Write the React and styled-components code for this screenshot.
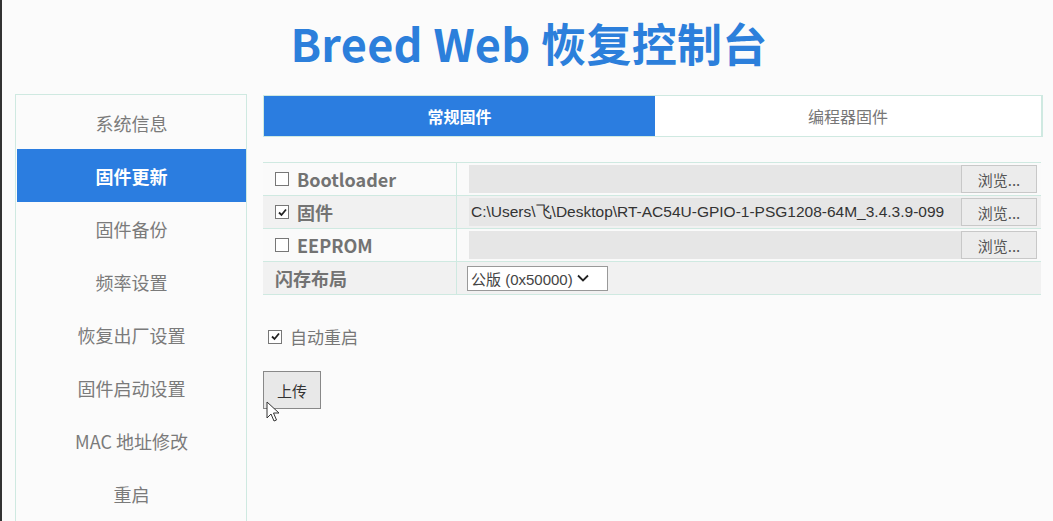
import styled, { createGlobalStyle } from 'styled-components';

const GlobalStyle = createGlobalStyle`
  html, body {
    margin: 0;
    padding: 0;
    background: #fbfbfb;
    font-family: "Noto Sans CJK SC", "Noto Sans", sans-serif;
    overflow: hidden;
  }
`;

const Page = styled.div`
  width: 1053px;
  height: 521px;
  box-sizing: border-box;
  border-left: 2px solid #333;
  padding: 0 10px 0 13px;
  overflow: hidden;
`;

const Title = styled.h1`
  margin: 0;
  height: 94px;
  display: flex;
  align-items: center;
  justify-content: center;
  padding-bottom: 9px;
  box-sizing: border-box;
  color: #2c7fdb;
  font-size: 45px;
  font-weight: 700;
  letter-spacing: 0.3px;
`;

const Body = styled.div`
  display: grid;
  grid-template-columns: 232px 1fr;
  gap: 16px;
`;

const Sidebar = styled.nav`
  border: 1px solid #cfe9e1;
  border-bottom: none;
  height: 440px;
  box-sizing: border-box;
  display: flex;
  flex-direction: column;
  padding: 1px 0 0;
`;

const NavItem = styled.div`
  height: 53px;
  display: flex;
  align-items: center;
  justify-content: center;
  font-size: 18px;
  color: ${(p) => (p.active ? '#fff' : '#7a7a7a')};
  background: ${(p) => (p.active ? '#2b7de0' : 'transparent')};
  font-weight: ${(p) => (p.active ? 700 : 400)};
  margin-left: 1px;
`;

const Main = styled.div`
  padding-top: 1px;
  width: 780px;
`;

const Tabs = styled.div`
  display: grid;
  grid-template-columns: 391px 1fr;
  height: 42px;
  border: 1px solid #cfe9e1;
  box-sizing: border-box;
`;

const Tab = styled.div`
  display: flex;
  align-items: center;
  justify-content: center;
  font-size: 16px;
  font-weight: ${(p) => (p.active ? 700 : 400)};
  color: ${(p) => (p.active ? '#fff' : '#777')};
  background: ${(p) => (p.active ? '#2b7de0' : '#fff')};
  border-right: ${(p) => (p.active ? 'none' : '1px solid #cfe9e1')};
`;

const Table = styled.div`
  margin-top: 25px;
  width: 778px;
  border-top: 1px solid #cfe9e1;
`;

const Row = styled.div`
  display: grid;
  grid-template-columns: 194px 1fr;
  height: 32px;
  border-bottom: 1px solid #cfe9e1;
  background: ${(p) => (p.shade ? '#f1f1f1' : '#fafafa')};
`;

const Label = styled.div`
  display: flex;
  align-items: center;
  gap: 7px;
  padding-left: 12px;
  border-right: 1px solid #cfe9e1;
  font-size: 18px;
  font-weight: 700;
  color: #737373;
`;

const Box = styled.span`
  width: 14px;
  height: 14px;
  border: 1px solid #777;
  background: #fff;
  display: inline-flex;
  align-items: center;
  justify-content: center;
  box-sizing: border-box;
  margin-right: 1px;
`;

const Cell = styled.div`
  display: flex;
  align-items: center;
  padding-left: 12px;
  padding-right: 4px;
`;

const FileField = styled.div`
  flex: 1;
  height: 28px;
  background: #e6e6e6;
  display: flex;
  align-items: center;
  padding-left: 2px;
  font-family: "Liberation Sans", Arial, sans-serif;
  font-size: 15.5px;
  color: #333;
  overflow: hidden;
  white-space: nowrap;
`;

const Browse = styled.div`
  width: 76px;
  flex-shrink: 0;
  height: 28px;
  box-sizing: border-box;
  border: 1px solid #c8c8c8;
  background: #ececec;
  display: flex;
  align-items: center;
  justify-content: center;
  font-size: 15px;
  color: #555;
`;

const Select = styled.div`
  height: 25px;
  width: 141px;
  box-sizing: border-box;
  border: 1px solid #999;
  background: #fff;
  display: flex;
  align-items: center;
  gap: 4px;
  padding-left: 3px;
  font-size: 15px;
  color: #444;
  font-family: "Liberation Sans", "Noto Sans CJK SC", sans-serif;
  margin-left: -2px;
`;

const AutoRow = styled.div`
  margin-top: 29px;
  display: flex;
  align-items: center;
  gap: 7px;
  padding-left: 5px;
  font-size: 17px;
  color: #777;
`;

const UploadWrap = styled.div`
  margin-top: 22px;
  position: relative;
  width: 58px;
`;

const Upload = styled.div`
  width: 58px;
  height: 38px;
  box-sizing: border-box;
  border: 1px solid #888;
  background: #e8e8e8;
  display: flex;
  align-items: center;
  justify-content: center;
  font-size: 15px;
  color: #333;
`;

const Cursor = styled.svg`
  position: absolute;
  left: 3px;
  top: 30px;
`;

const Check = () => (
  <svg width="11" height="11" viewBox="0 0 11 11">
    <path d="M2 5.5 L4.5 8 L9 2.5" fill="none" stroke="#222" strokeWidth="1.8" />
  </svg>
);

const Checkbox = ({ checked }) => <Box>{checked && <Check />}</Box>;

const navItems = ['系统信息', '固件更新', '固件备份', '频率设置', '恢复出厂设置', '固件启动设置', 'MAC 地址修改', '重启'];

export default function App() {
  return (
    <>
      <GlobalStyle />
      <Page>
        <Title>Breed Web 恢复控制台</Title>
        <Body>
          <Sidebar>
            {navItems.map((n) => (
              <NavItem key={n} active={n === '固件更新'}>{n}</NavItem>
            ))}
          </Sidebar>
          <Main>
            <Tabs>
              <Tab active>常规固件</Tab>
              <Tab>编程器固件</Tab>
            </Tabs>
            <Table>
              <Row>
                <Label><Checkbox />Bootloader</Label>
                <Cell><FileField /><Browse>浏览...</Browse></Cell>
              </Row>
              <Row shade>
                <Label><Checkbox checked />固件</Label>
                <Cell>
                  <FileField>C:\Users\飞\Desktop\RT-AC54U-GPIO-1-PSG1208-64M_3.4.3.9-099</FileField>
                  <Browse>浏览...</Browse>
                </Cell>
              </Row>
              <Row>
                <Label><Checkbox />EEPROM</Label>
                <Cell><FileField /><Browse>浏览...</Browse></Cell>
              </Row>
              <Row shade>
                <Label>闪存布局</Label>
                <Cell>
                  <Select>
                    公版 (0x50000)
                    <svg width="12" height="8" viewBox="0 0 12 8">
                      <path d="M1 1.5 L6 6.5 L11 1.5" fill="none" stroke="#222" strokeWidth="1.8" />
                    </svg>
                  </Select>
                </Cell>
              </Row>
            </Table>
            <AutoRow><Checkbox checked />自动重启</AutoRow>
            <UploadWrap>
              <Upload>上传</Upload>
              <Cursor width="14" height="22" viewBox="0 0 14 22">
                <path d="M1 1 L1 17 L5 13 L8 20 L10.5 19 L7.5 12 L13 12 Z" fill="#fff" stroke="#333" strokeWidth="1" />
              </Cursor>
            </UploadWrap>
          </Main>
        </Body>
      </Page>
    </>
  );
}
